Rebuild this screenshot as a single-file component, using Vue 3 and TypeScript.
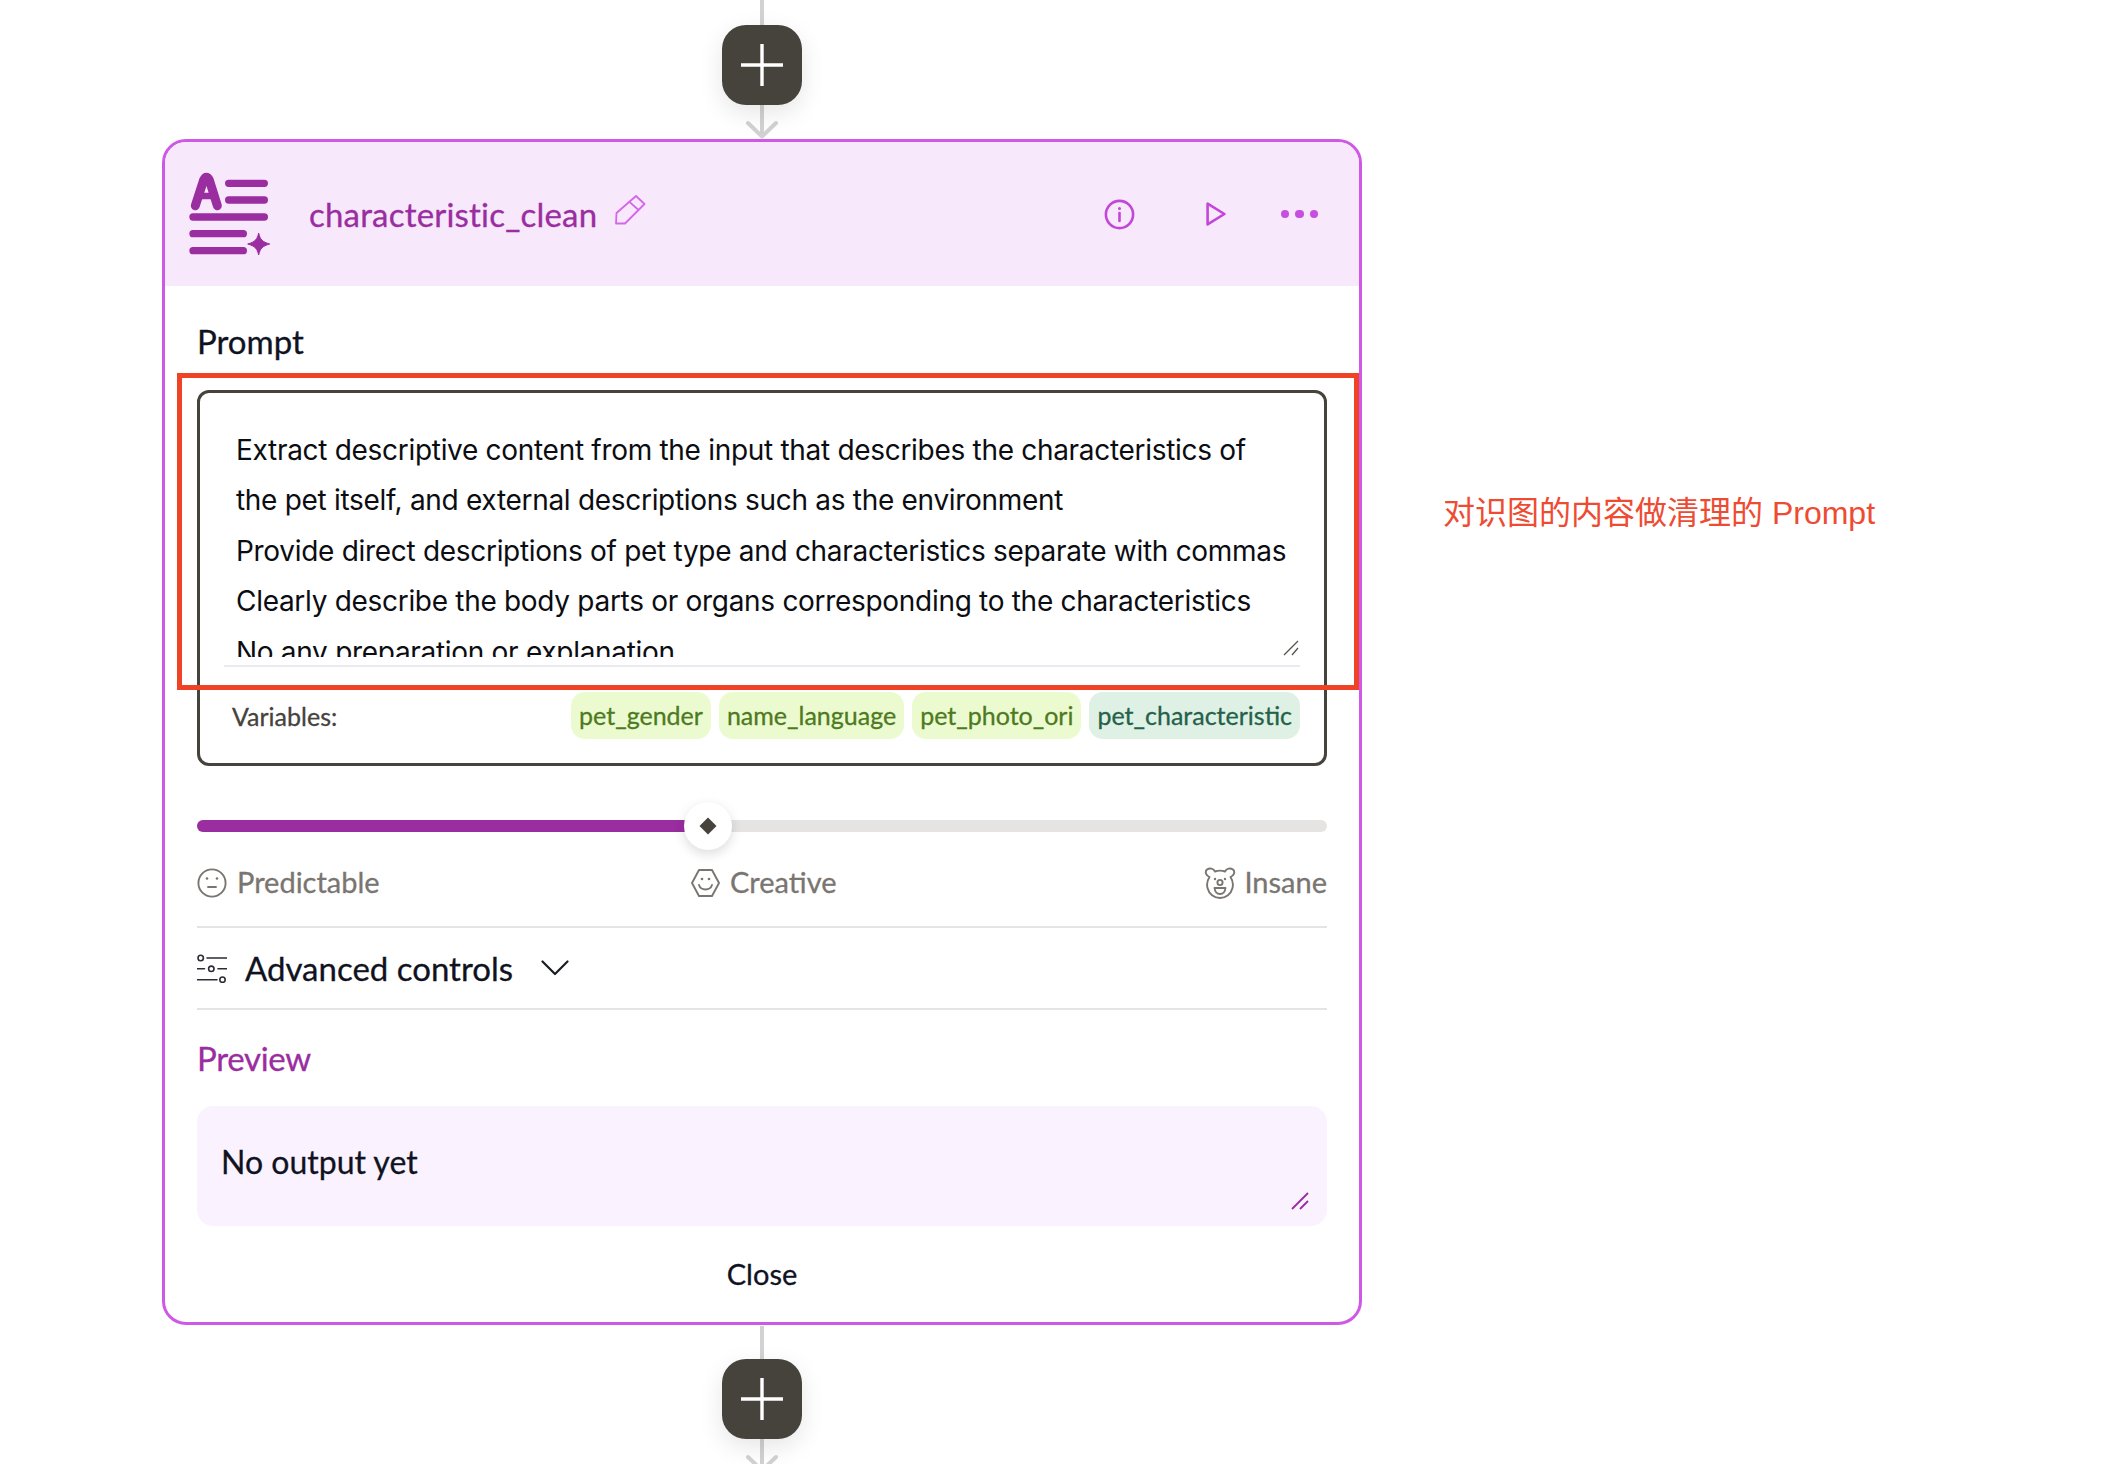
<script setup lang="ts">
const promptLines: string[] = [
  'Extract descriptive content from the input that describes the characteristics of',
  'the pet itself, and external descriptions such as the environment',
  'Provide direct descriptions of pet type and characteristics separate with commas',
  'Clearly describe the body parts or organs corresponding to the characteristics',
  'No any preparation or explanation',
]
const variables = [
  { name: 'pet_gender', own: false },
  { name: 'name_language', own: false },
  { name: 'pet_photo_ori', own: false },
  { name: 'pet_characteristic', own: true },
]
const sliderPercent = 45.2
</script>

<template>
  <div class="page">
    <div class="flow">
      <div class="connector">
        <div class="stem"></div>
        <button class="add" aria-label="Add step">
          <svg width="42" height="42" viewBox="0 0 42 42"><path d="M21 0V42M0 21H42" stroke="#fff" stroke-width="3.4" fill="none" /></svg>
        </button>
        <svg class="tail" width="34" height="34" viewBox="0 0 34 34"><path d="M17 0V31M3 18L17 31.5L31 18" stroke="#d2d2d2" stroke-width="4" stroke-linecap="round" stroke-linejoin="round" fill="none" /></svg>
      </div>

      <section class="card">
        <header class="head">
          <svg class="logo" width="84" height="84" viewBox="42 48 252 252">
            <g fill="none" stroke="#9a2da0" stroke-linecap="round">
              <path d="M61 149L86 72Q94 56 103 72L127 149" stroke-width="27" stroke-linejoin="round" />
              <path d="M72 120H118" stroke-width="20" />
              <path d="M161 82H268M161 132H268M54 183H268M54 233H205M54 284H205" stroke-width="22" />
            </g>
            <path d="M251 231C255 250 262 258 284 264C262 270 255 278 251 297C247 278 240 270 218 264C240 258 247 250 251 231Z" fill="#9a2da0" stroke="#9a2da0" stroke-width="3" stroke-linejoin="round" />
          </svg>
          <span class="title">characteristic_clean</span>
          <svg class="pencil" width="31" height="30" viewBox="0 0 31 30" fill="none" stroke="#d566ec" stroke-width="1.8" stroke-linejoin="round">
            <path d="M1 28.5L1.5 18L21 1L29.5 9L10 28.5Z" />
            <path d="M14.5 6.8L23.5 15" />
          </svg>
          <div class="actions">
            <svg class="info" width="31" height="31" viewBox="0 0 31 31" fill="none" stroke="#c247d8" stroke-width="2.6">
              <circle cx="15.5" cy="15.5" r="13.6" />
              <path d="M15.5 14V22" stroke-linecap="round" />
              <circle cx="15.5" cy="9.6" r="1.5" fill="#c247d8" stroke="none" />
            </svg>
            <svg class="play" width="20" height="24" viewBox="0 0 20 24" fill="none" stroke="#c247d8" stroke-width="2.6" stroke-linejoin="round">
              <path d="M1.6 1.6V22.4L18.4 12Z" />
            </svg>
            <div class="dots"><i></i><i></i><i></i></div>
          </div>
        </header>

        <div class="body">
          <div class="label">Prompt</div>
          <div class="prompt-box">
            <div class="text-wrap">
              <div class="text">
                <div v-for="line in promptLines" :key="line" class="line">{{ line }}</div>
              </div>
              <svg class="grip" width="16" height="16" viewBox="0 0 16 16" stroke="#55514c" stroke-width="1.3" fill="none"><path d="M1 15L15 1M9 15L15 8" /></svg>
            </div>
            <div class="vars">
              <span class="vars-label">Variables:</span>
              <div class="chips">
                <span v-for="v in variables" :key="v.name" class="chip" :class="{ own: v.own }">{{ v.name }}</span>
              </div>
            </div>
          </div>

          <div class="slider">
            <div class="track"><div class="fill" :style="{ width: sliderPercent + '%' }"></div></div>
            <div class="thumb" :style="{ left: sliderPercent + '%' }"><i></i></div>
          </div>

          <div class="levels">
            <div class="level">
              <svg width="30" height="30" viewBox="0 0 30 30" fill="none" stroke="#7a7570" stroke-width="1.9" stroke-linecap="round">
                <circle cx="15" cy="15" r="13.6" />
                <circle cx="10" cy="10.5" r="1.3" fill="#7a7570" stroke="none" />
                <circle cx="20" cy="10.5" r="1.3" fill="#7a7570" stroke="none" />
                <path d="M11 19H19" />
              </svg>
              <span>Predictable</span>
            </div>
            <div class="level">
              <svg width="29" height="30" viewBox="0 0 29 30" fill="none" stroke="#7a7570" stroke-width="1.9" stroke-linecap="round" stroke-linejoin="round">
                <path d="M1 15L8 2H21L28 15L21 28H8Z" />
                <circle cx="11" cy="11" r="1.3" fill="#7a7570" stroke="none" />
                <circle cx="18" cy="11" r="1.3" fill="#7a7570" stroke="none" />
                <path d="M8 17C10 23 19 23 21 17" />
              </svg>
              <span>Creative</span>
            </div>
            <div class="level">
              <svg width="32" height="32" viewBox="0 0 32 32" fill="none" stroke="#7a7570" stroke-width="1.9" stroke-linecap="round" stroke-linejoin="round">
                <path d="M5.5 10C2 8.5 0.5 5 3 2.5C6 0.5 9.5 1.5 11 4.5C14 3.4 18 3.4 21 4.5C22.5 1.5 26 0.5 29 2.5C31.5 5 30 8.5 26.5 10C28.5 13 29.5 17 28.5 21C27 27 22 31 16 31C10 31 5 27 3.5 21C2.5 17 3.5 13 5.5 10Z" />
                <circle cx="11" cy="12" r="1.2" fill="#7a7570" stroke="none" />
                <circle cx="21" cy="12" r="1.2" fill="#7a7570" stroke="none" />
                <circle cx="16" cy="15.5" r="2.6" />
                <path d="M10.5 21H21.5C21 25 19 27 16 27C13 27 11 25 10.5 21Z" />
              </svg>
              <span>Insane</span>
            </div>
          </div>

          <div class="advanced">
            <svg width="30" height="29" viewBox="0 0 30 29" fill="none" stroke="#2b2c35" stroke-width="1.6" stroke-linecap="round">
              <circle cx="3.7" cy="4" r="2.7" />
              <path d="M10 4H29.5" />
              <path d="M0.5 14.8H7.5" />
              <circle cx="14.3" cy="14.8" r="2.7" />
              <path d="M21 14.8H29.5" />
              <path d="M0.5 25.7H20" />
              <circle cx="25.5" cy="25.7" r="2.7" />
            </svg>
            <span class="advanced-label">Advanced controls</span>
            <svg class="chev" width="28" height="16" viewBox="0 0 28 16" fill="none" stroke="#1a1c25" stroke-width="2.2" stroke-linecap="round" stroke-linejoin="round"><path d="M1.5 1.5L14 14L26.5 1.5" /></svg>
          </div>

          <div class="preview-label">Preview</div>
          <div class="preview">
            <span>No output yet</span>
            <svg class="grip-purple" width="18" height="18" viewBox="0 0 18 18" stroke="#9a2da0" stroke-width="1.8" fill="none"><path d="M1 17L17 1M9 17L17 9" /></svg>
          </div>
          <div class="close">Close</div>
        </div>
      </section>

      <div class="connector lower">
        <div class="stem"></div>
        <button class="add" aria-label="Add step">
          <svg width="42" height="42" viewBox="0 0 42 42"><path d="M21 0V42M0 21H42" stroke="#fff" stroke-width="3.4" fill="none" /></svg>
        </button>
        <svg class="tail" width="34" height="34" viewBox="0 0 34 34"><path d="M17 0V31M3 18L17 31.5L31 18" stroke="#d2d2d2" stroke-width="4" stroke-linecap="round" stroke-linejoin="round" fill="none" /></svg>
      </div>
    </div>

    <div class="annot-box"></div>
    <div class="annot-text">对识图的内容做清理的 Prompt</div>
  </div>
</template>

<style scoped>
.page {
  position: relative;
  width: 2124px;
  height: 1464px;
  overflow: hidden;
  background: #fff;
  font-family: Lato, "Noto Sans CJK SC", sans-serif;
  color: #10131f;
  -webkit-text-stroke: 0.3px currentColor;
}
.flow {
  width: 1200px;
  margin-left: 162px;
  display: flex;
  flex-direction: column;
}
.connector {
  display: flex;
  flex-direction: column;
  align-items: center;
}
.stem {
  width: 4px;
  height: 25px;
  background: #d2d2d2;
}
.lower {
  margin-top: 1px;
}
.lower .stem {
  height: 33px;
}
.add {
  width: 80px;
  height: 80px;
  border: 0;
  padding: 0;
  border-radius: 24px;
  background: #46423c;
  display: flex;
  align-items: center;
  justify-content: center;
  box-shadow: 0 8px 24px rgba(0, 0, 0, 0.1);
  position: relative;
}
.tail {
  display: block;
}
.card {
  box-sizing: border-box;
  height: 1186px;
  border: 3px solid #cf59e6;
  border-radius: 24px;
  overflow: hidden;
  background: #fff;
}
.head {
  height: 144px;
  background: #f7e8fc;
  display: flex;
  align-items: center;
  padding-left: 24px;
  box-sizing: border-box;
}
.logo {
  flex: none;
}
.title {
  margin-left: 36px;
  font-size: 33px;
  letter-spacing: 0.2px;
  line-height: 44px;
  color: #9a2da0;
}
.pencil {
  margin-left: 18px;
  margin-top: -8px;
}
.actions {
  margin-left: auto;
  padding-right: 41px;
  display: flex;
  align-items: center;
}
.play {
  margin-left: 71px;
}
.dots {
  margin-left: 55px;
  display: flex;
  gap: 6px;
}
.dots i {
  width: 8.5px;
  height: 8.5px;
  border-radius: 50%;
  background: #c74fe0;
}
.body {
  padding: 35px 32px 0 32px;
}
.label {
  font-size: 33px;
  line-height: 40px;
}
.prompt-box {
  box-sizing: border-box;
  margin-top: 29px;
  height: 376px;
  border: 3px solid #46423c;
  border-radius: 12px;
}
.text-wrap {
  position: relative;
  margin: 0 24px;
  border-bottom: 2px solid #eaeaf0;
  padding-top: 32px;
  height: 240px;
}
.text {
  height: 232px;
  overflow: hidden;
  padding-left: 12px;
  font-family: Inter, sans-serif;
  font-size: 28px;
  letter-spacing: -0.3px;
  line-height: 50.4px;
  color: #0b0d12;
  -webkit-text-stroke: 0;
}
.line {
  white-space: nowrap;
}
.grip {
  position: absolute;
  right: 1px;
  bottom: 9px;
}
.vars {
  margin: 25px 24px 0;
  padding-left: 8px;
  display: flex;
  align-items: center;
  justify-content: space-between;
}
.vars-label {
  font-size: 25px;
  color: #46423c;
}
.chips {
  display: flex;
  gap: 8px;
}
.chip {
  height: 47px;
  padding: 0 8px;
  box-sizing: border-box;
  border-radius: 14px;
  background: #ecfbcf;
  color: #4e7a1f;
  font-size: 25px;
  line-height: 46px;
}
.chip.own {
  background: #dff1e4;
  color: #25614a;
}
.slider {
  position: relative;
  height: 48px;
  margin-top: 36px;
  display: flex;
  align-items: center;
}
.track {
  width: 100%;
  height: 12px;
  border-radius: 6px;
  background: #e5e4e2;
  overflow: hidden;
}
.fill {
  height: 100%;
  background: #9a2da0;
}
.thumb {
  position: absolute;
  top: 0;
  width: 48px;
  height: 48px;
  margin-left: -24px;
  border-radius: 50%;
  background: #fff;
  box-shadow: 0 4px 12px rgba(0, 0, 0, 0.14);
  display: flex;
  align-items: center;
  justify-content: center;
}
.thumb i {
  width: 12px;
  height: 12px;
  background: #46423c;
  transform: rotate(45deg);
}
.levels {
  margin-top: 17px;
  height: 30px;
  display: grid;
  grid-template-columns: 494px 1fr auto;
  color: #7a7570;
  font-size: 29px;
}
.level {
  display: flex;
  align-items: center;
  gap: 10px;
  line-height: 30px;
}
.level:last-child {
  gap: 8px;
}
.level span {
  padding-bottom: 2px;
}
.advanced {
  margin-top: 29px;
  height: 84px;
  box-sizing: border-box;
  border-top: 2px solid #e5e4e2;
  border-bottom: 2px solid #e5e4e2;
  display: flex;
  align-items: center;
}
.advanced-label {
  margin-left: 18px;
  font-size: 33px;
}
.chev {
  margin-left: 28px;
}
.preview-label {
  margin-top: 28px;
  font-size: 33px;
  letter-spacing: -0.3px;
  line-height: 40px;
  color: #9a2da0;
}
.preview {
  position: relative;
  margin-top: 28px;
  height: 120px;
  border-radius: 16px;
  background: #faf3ff;
  padding: 36px 24px 0;
  box-sizing: border-box;
  font-size: 32px;
  line-height: 40px;
}
.grip-purple {
  position: absolute;
  right: 18px;
  bottom: 16px;
}
.close {
  margin-top: 28px;
  text-align: center;
  font-size: 29px;
  line-height: 40px;
}
.annot-box {
  position: absolute;
  left: 177px;
  top: 373px;
  width: 1182px;
  height: 317px;
  box-sizing: border-box;
  border: 5px solid #f04224;
}
.annot-text {
  position: absolute;
  left: 1443px;
  top: 493px;
  font-family: "Liberation Sans", "Noto Sans CJK SC", sans-serif;
  font-size: 32px;
  line-height: 40px;
  color: #ee4b33;
  white-space: nowrap;
  -webkit-text-stroke: 0;
}
</style>
